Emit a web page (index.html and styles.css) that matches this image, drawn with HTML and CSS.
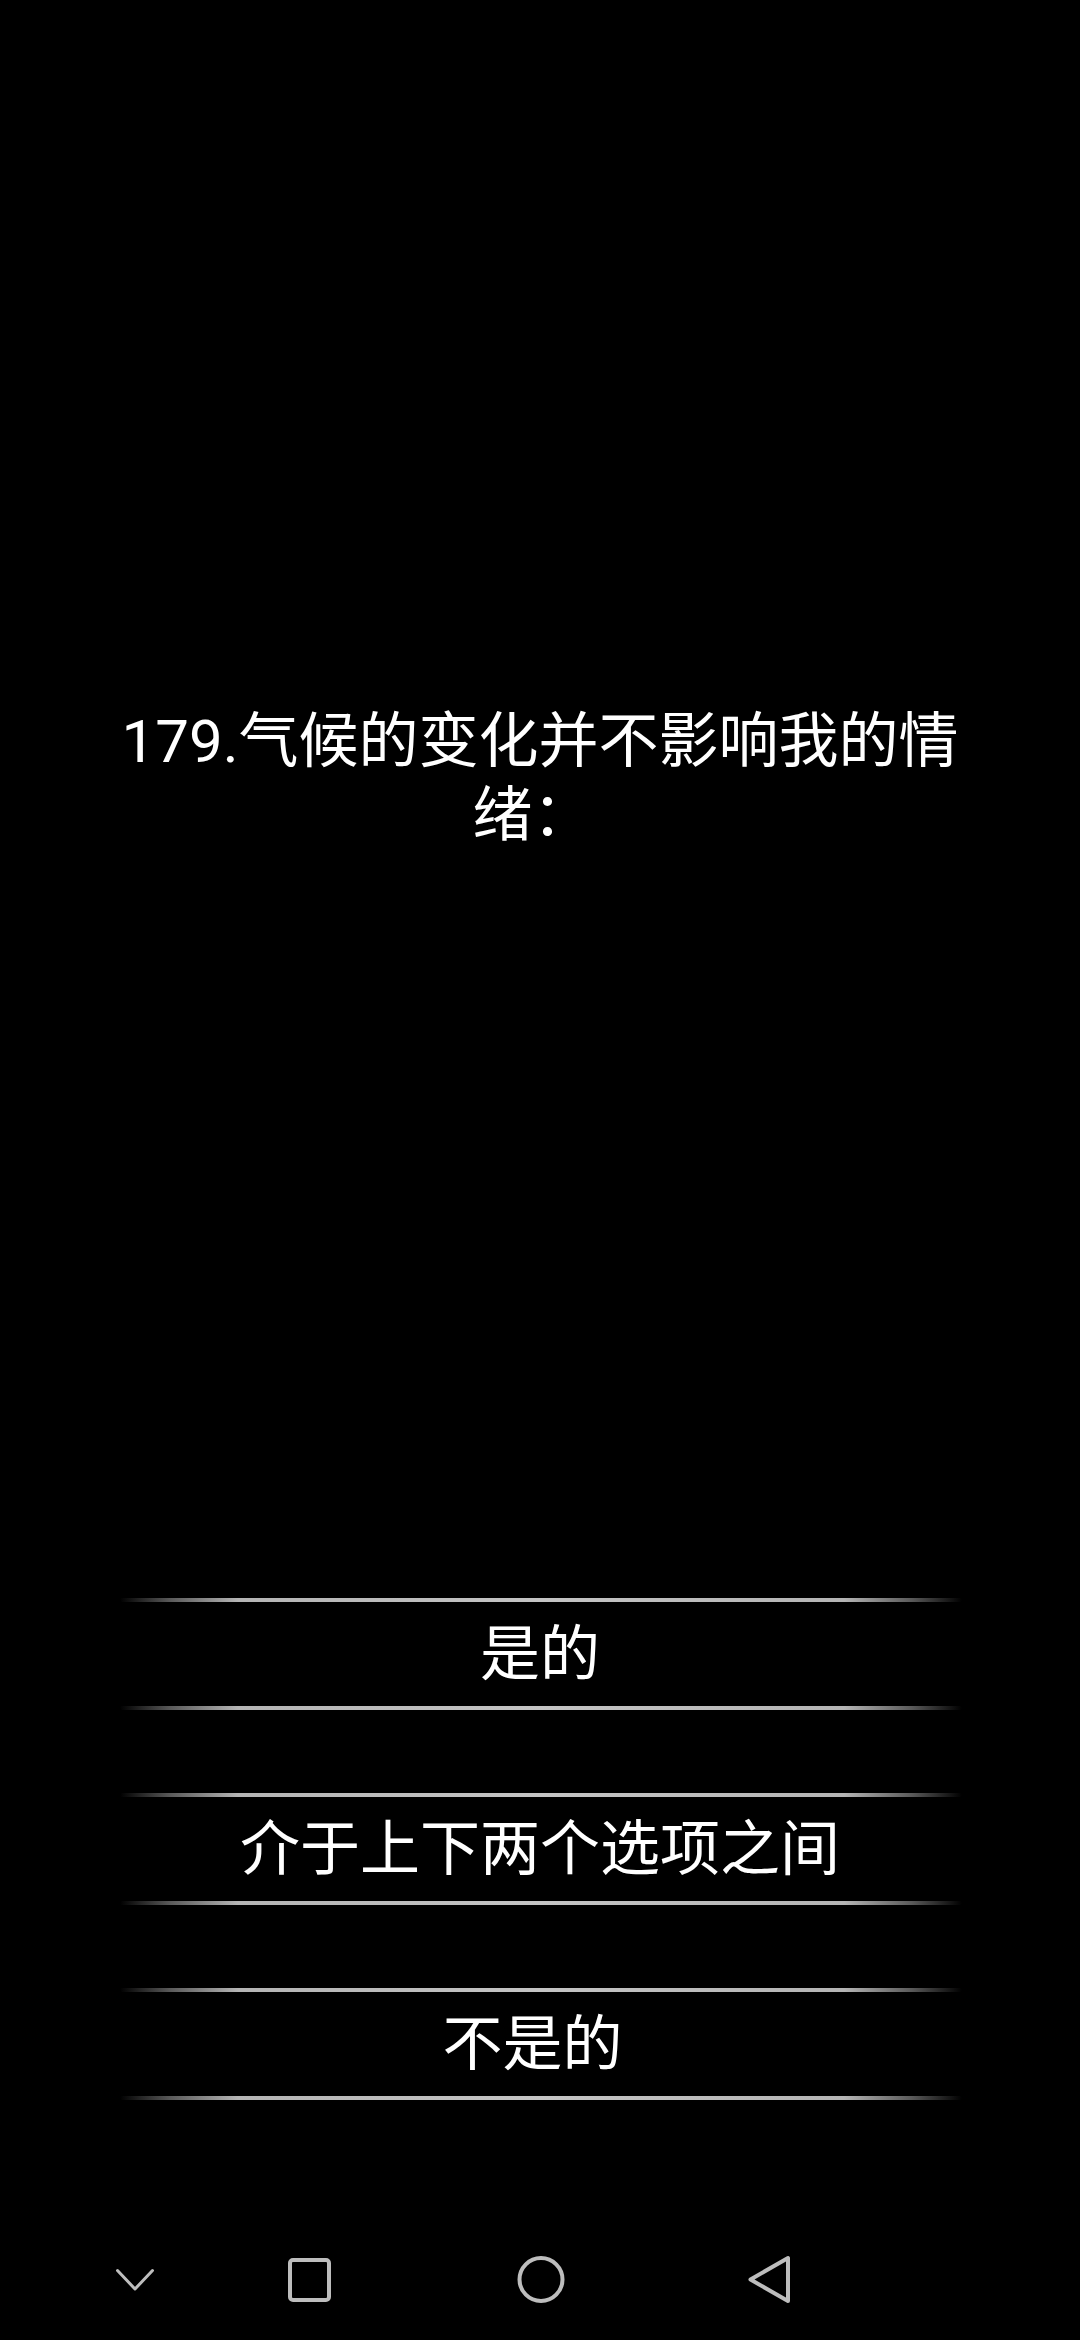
FILE: index.html
```html
<!DOCTYPE html>
<html lang="zh-CN">
<head>
<meta charset="utf-8">
<meta name="viewport" content="width=1080">
<title>179</title>
<link rel="stylesheet" href="styles.css">
</head>
<body>
<div class="screen">
  <main class="content">
    <h1 class="question">179.气候的变化并不影响我的情绪： </h1>
    <ul class="options">
      <li class="option"><span class="option-text">是的</span></li>
      <li class="option"><span class="option-text">介于上下两个选项之间</span></li>
      <li class="option"><span class="option-text">不是的 </span></li>
    </ul>
  </main>
  <nav class="navbar">
    <div class="nav-btn nav-hide">
      <svg viewBox="0 0 60 60" width="60" height="60"><path d="M12.5 20.5 L30 39 L47.5 20.5" fill="none" stroke="#bdbdbd" stroke-width="3" stroke-linecap="round" stroke-linejoin="round"/></svg>
    </div>
    <div class="nav-btn nav-recent">
      <svg viewBox="0 0 60 60" width="60" height="60"><rect x="11" y="10" width="39" height="40" rx="3" fill="none" stroke="#bdbdbd" stroke-width="4"/></svg>
    </div>
    <div class="nav-btn nav-home">
      <svg viewBox="0 0 60 60" width="60" height="60"><circle cx="30" cy="29.5" r="21.5" fill="none" stroke="#bdbdbd" stroke-width="4"/></svg>
    </div>
    <div class="nav-btn nav-back">
      <svg viewBox="0 0 60 60" width="60" height="60"><path d="M11.5 29.5 L49 8 L49 51 Z" fill="none" stroke="#bdbdbd" stroke-width="4" stroke-linejoin="round"/></svg>
    </div>
  </nav>
</div>
</body>
</html>
```

FILE: styles.css
```css
html, body {
  margin: 0;
  padding: 0;
  background: #000;
}

body {
  font-family: Roboto, "Noto Sans CJK SC", sans-serif;
  color: #fff;
}

.screen {
  width: 1080px;
  height: 2340px;
  display: flex;
  flex-direction: column;
  overflow: hidden;
}

.content {
  flex: 1;
  display: flex;
  flex-direction: column;
  align-items: center;
}

.question {
  margin: 705px 0 0;
  width: 860px;
  font-size: 60px;
  line-height: 74px;
  font-weight: 400;
  text-align: center;
  color: #fff;
  white-space: break-spaces;
}

.options {
  list-style: none;
  margin: 745px 0 0;
  padding: 0;
  width: 1080px;
  display: flex;
  flex-direction: column;
  gap: 83px;
}

.option {
  display: flex;
  flex-direction: column;
  align-items: center;
}

.option::before,
.option::after {
  content: "";
  display: block;
  width: 842px;
  height: 4px;
  margin-left: 2px;
  background: linear-gradient(to right,
    rgba(190,190,190,0) 0%,
    rgba(150,150,150,0.6) 6%,
    #b4b4b4 14%,
    #c4c4c4 50%,
    #b4b4b4 86%,
    rgba(150,150,150,0.6) 94%,
    rgba(190,190,190,0) 100%);
  border-radius: 2px;
}

.option-text {
  display: block;
  height: 104px;
  box-sizing: border-box;
  padding-top: 3px;
  font-size: 60px;
  line-height: 100px;
  text-align: center;
  color: #fff;
  white-space: break-spaces;
}

.navbar {
  height: 150px;
  display: flex;
  align-items: flex-start;
  padding-left: 105px;
  padding-top: 60px;
  box-sizing: border-box;
}

.nav-btn {
  width: 60px;
  height: 60px;
}

.nav-btn svg {
  display: block;
}

.nav-recent { margin-left: 114px; }
.nav-home { margin-left: 172px; }
.nav-back { margin-left: 168px; }
```
